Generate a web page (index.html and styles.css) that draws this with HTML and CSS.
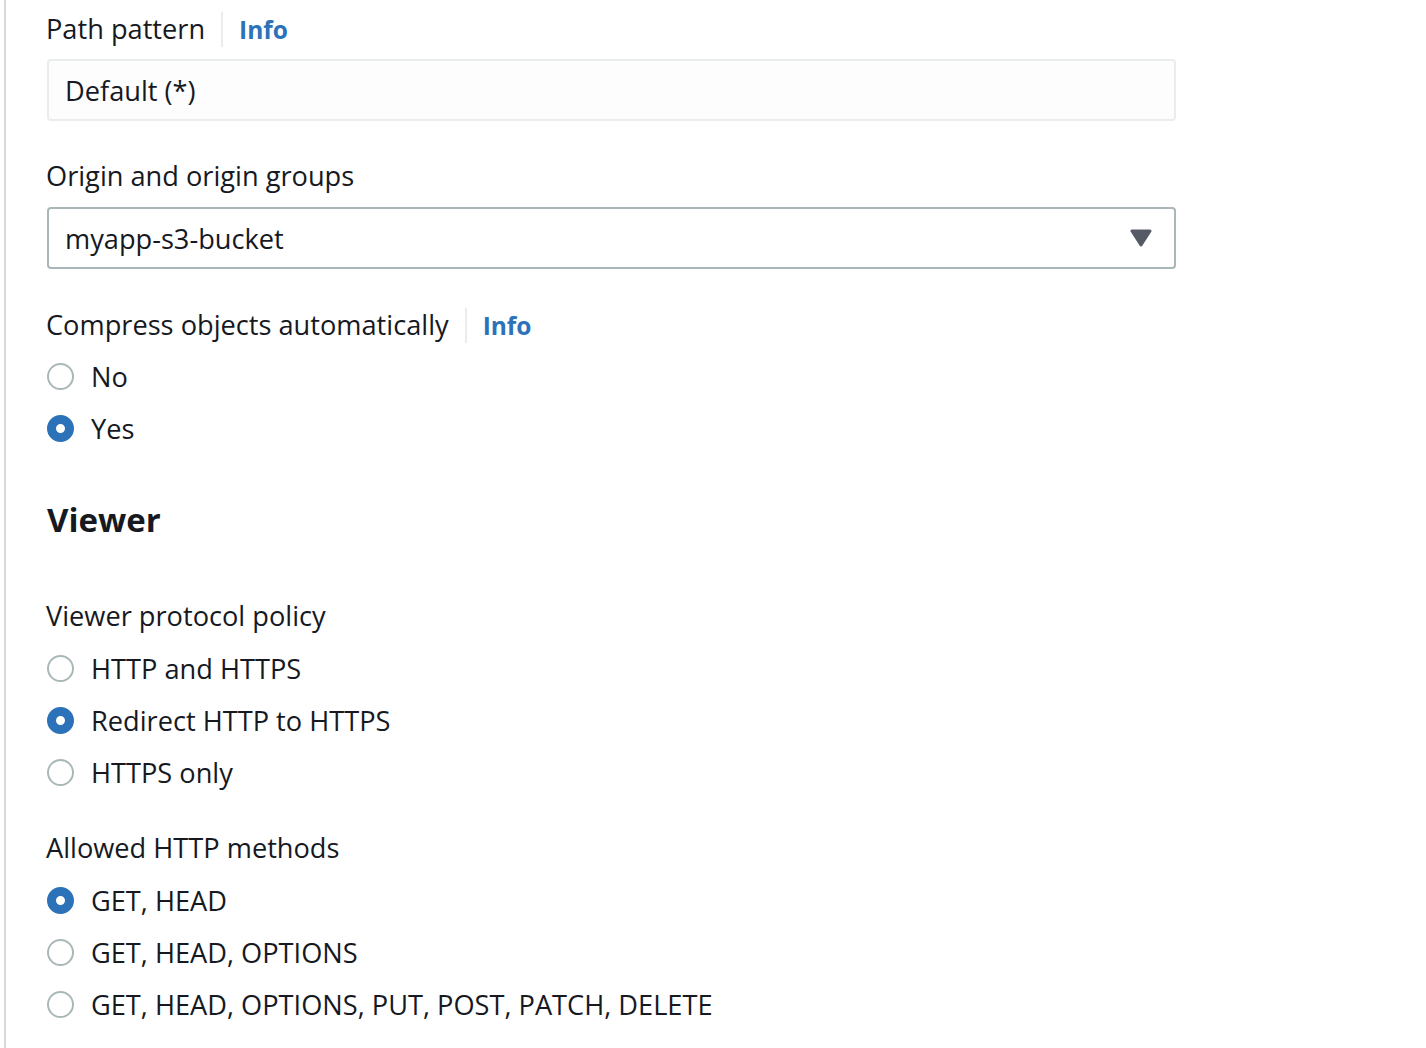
FILE: index.html
```html
<!DOCTYPE html>
<html>
<head>
<meta charset="utf-8">
<link rel="stylesheet" href="styles.css">
</head>
<body>
<div class="panel">
  <div class="field f-path">
    <div class="label-row"><span class="label">Path pattern</span><span class="sep"></span><a class="info">Info</a></div>
    <div class="input disabled">Default (*)</div>
  </div>
  <div class="field f-origin">
    <div class="label-row"><span class="label">Origin and origin groups</span></div>
    <div class="input select">myapp-s3-bucket
      <svg class="caret" width="22" height="18" viewBox="0 0 22 18"><path d="M2 2 H20 L11 16 Z" fill="#545b64" stroke="#545b64" stroke-width="3" stroke-linejoin="round"/></svg>
    </div>
  </div>
  <div class="field f-compress">
    <div class="label-row"><span class="label">Compress objects automatically</span><span class="sep"></span><a class="info">Info</a></div>
    <div class="radios">
      <div class="radio"><span class="dot"></span>No</div>
      <div class="radio"><span class="dot on"></span>Yes</div>
    </div>
  </div>
  <h2 class="heading">Viewer</h2>
  <div class="field f-vpp">
    <div class="label-row"><span class="label">Viewer protocol policy</span></div>
    <div class="radios">
      <div class="radio"><span class="dot"></span>HTTP and HTTPS</div>
      <div class="radio"><span class="dot on"></span>Redirect HTTP to HTTPS</div>
      <div class="radio"><span class="dot"></span>HTTPS only</div>
    </div>
  </div>
  <div class="field f-methods">
    <div class="label-row"><span class="label">Allowed HTTP methods</span></div>
    <div class="radios">
      <div class="radio"><span class="dot on"></span>GET, HEAD</div>
      <div class="radio"><span class="dot"></span>GET, HEAD, OPTIONS</div>
      <div class="radio"><span class="dot"></span>GET, HEAD, OPTIONS, PUT, POST, PATCH, DELETE</div>
    </div>
  </div>
</div>
</body>
</html>
```

FILE: styles.css
```css
html, body {
  margin: 0;
  padding: 0;
  background: #ffffff;
}
body {
  font-family: "Open Sans", "Noto Sans", sans-serif;
  color: #16191f;
  font-size: 27.2px;
  font-weight: 500;
  height: 1048px;
  overflow: hidden;
}
.panel {
  box-sizing: border-box;
  margin-left: 4px;
  border-left: 2px solid #d5dbdb;
  padding-left: 41px;
  padding-top: 9px;
  height: 1048px;
  width: 1180px;
}
.label-row {
  display: flex;
  align-items: center;
  height: 40px;
  margin-bottom: 10px;
}
.label {
  line-height: 40px;
  margin-left: -1px;
}
.sep {
  width: 2px;
  height: 35px;
  background: #eaeded;
  margin: 0 16px 0 16px;
}
.info {
  color: #2b72b8;
  font-weight: 700;
  font-size: 24.5px;
}
.input {
  box-sizing: border-box;
  width: 1129px;
  height: 62px;
  border: 2px solid #aab7b8;
  border-radius: 4px;
  padding: 0 16px;
  display: flex;
  align-items: center;
  position: relative;
}
.input.disabled {
  border-color: #eaeded;
  background: #fdfdfd;
}
.f-origin {
  margin-top: 35px;
}
.f-origin .label-row {
  margin-bottom: 11px;
}
.caret {
  position: absolute;
  right: 22px;
  top: 20px;
}
.f-compress {
  margin-top: 36px;
}
.radios {
  margin-top: -5px;
}
.radio {
  display: flex;
  align-items: center;
  height: 52px;
}
.dot {
  box-sizing: border-box;
  width: 27px;
  height: 27px;
  border-radius: 50%;
  border: 2px solid #aab7b8;
  margin-right: 17px;
  background: #fff;
}
.dot.on {
  border: 9px solid #2b72b8;
}
.heading {
  margin: 42px 0 0 0;
  font-size: 33px;
  font-weight: 700;
  line-height: 48px;
}
.f-vpp {
  margin-top: 52px;
}
.f-vpp .radios {
  margin-top: -4px;
}
.f-methods {
  margin-top: 30px;
}
.f-methods .radios {
  margin-top: -4px;
}
```
